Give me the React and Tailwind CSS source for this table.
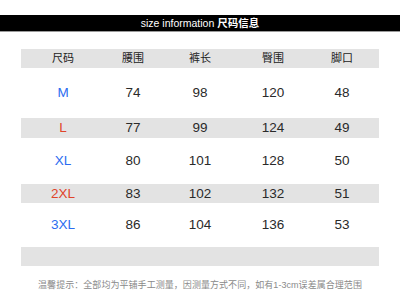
import React from "react";

const rows = [
  { s: "M", c: "text-[#2b6cf0]", v: ["74", "98", "120", "48"], gray: false, h: "h-[50px]" },
  { s: "L", c: "text-[#e0442a]", v: ["77", "99", "124", "49"], gray: true, h: "h-[20px]" },
  { s: "XL", c: "text-[#2b6cf0]", v: ["80", "101", "128", "50"], gray: false, h: "h-[46px]" },
  { s: "2XL", c: "text-[#e0442a]", v: ["83", "102", "132", "51"], gray: true, h: "h-[19px]" },
  { s: "3XL", c: "text-[#2b6cf0]", v: ["86", "104", "136", "53"], gray: false, h: "h-[44px]" },
];

const grid = "grid grid-cols-[70px_70px_64px_82px_56px] pl-[7px] items-center text-center";

export default function App() {
  return (
    <div className="w-[400px] h-[299px] bg-white overflow-hidden font-['Liberation_Sans','Noto_Sans_CJK_SC',sans-serif]">
      <div className="h-[15px]" />
      <div className="h-[17px] bg-black border-b border-[#9a9a9a] flex items-center justify-center text-white text-[10.5px] leading-none">
        <span>size information </span>
        <span className="font-bold ml-[3px]">尺码信息</span>
      </div>
      <div className="h-[17px]" />
      <div className="mx-[21px]">
        <div className={`${grid} h-[19px] bg-[#e3e3e3] text-[11px] text-[#222]`}>
          <span>尺码</span>
          <span>腰围</span>
          <span>裤长</span>
          <span>臀围</span>
          <span>脚口</span>
        </div>
        {rows.map((r) => (
          <div key={r.s} className={`${grid} ${r.h} ${r.gray ? "bg-[#e3e3e3]" : ""} text-[13.5px] text-[#2a2a2a] leading-none`}>
            <span className={r.c}>{r.s}</span>
            {r.v.map((x, i) => (
              <span key={i}>{x}</span>
            ))}
          </div>
        ))}
        <div className="h-[19px] bg-[#e3e3e3]" />
      </div>
      <div className="mt-[15px] text-center text-[9px] tracking-[0.05px] text-[#8a8a8a] leading-none">
        温馨提示：全部均为平铺手工测量，因测量方式不同，如有1-3cm误差属合理范围
      </div>
    </div>
  );
}
